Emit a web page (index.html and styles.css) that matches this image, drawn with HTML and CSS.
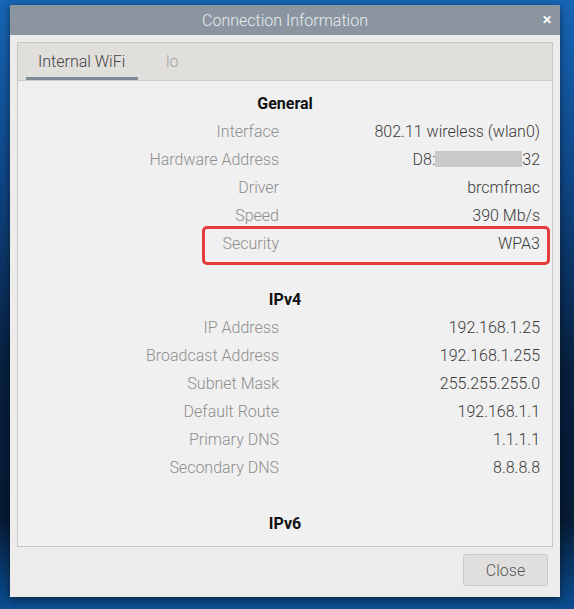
FILE: index.html
```html
<!DOCTYPE html>
<html lang="en">
<head>
    <meta charset="UTF-8">
    <meta name="viewport" content="width=device-width, initial-scale=1.0">
    <title>Connection Information</title>
    <link rel="stylesheet" href="styles.css">
</head>
<body>

<div class="window">
    <div class="titlebar">
        <span></span>
        <span class="title">Connection Information</span>
        <span class="close-x">&#x2715;</span>
    </div>

    <div class="notebook">
        <div class="tabs">
            <div class="tab active">Internal WiFi</div>
            <div class="tab">lo</div>
        </div>

        <div class="page">
            <h3 class="section">General</h3>
            <div class="row"><span class="label">Interface</span><span class="value">802.11 wireless (wlan0)</span></div>
            <div class="row"><span class="label">Hardware Address</span><span class="value">D8:<span class="redact"></span>32</span></div>
            <div class="row"><span class="label">Driver</span><span class="value">brcmfmac</span></div>
            <div class="row"><span class="label">Speed</span><span class="value">390 Mb/s</span></div>
            <div class="row marked"><span class="label">Security</span><span class="value">WPA3</span></div>

            <h3 class="section spaced">IPv4</h3>
            <div class="row"><span class="label">IP Address</span><span class="value">192.168.1.25</span></div>
            <div class="row"><span class="label">Broadcast Address</span><span class="value">192.168.1.255</span></div>
            <div class="row"><span class="label">Subnet Mask</span><span class="value">255.255.255.0</span></div>
            <div class="row"><span class="label">Default Route</span><span class="value">192.168.1.1</span></div>
            <div class="row"><span class="label">Primary DNS</span><span class="value">1.1.1.1</span></div>
            <div class="row"><span class="label">Secondary DNS</span><span class="value">8.8.8.8</span></div>

            <h3 class="section spaced">IPv6</h3>
        </div>
    </div>

    <div class="buttons">
        <button class="btn">Close</button>
    </div>
</div>

</body>
</html>
```

FILE: styles.css
```css
body {
    margin: 0;
    height: 609px;
    overflow: hidden;
    font-family: Roboto, "Liberation Sans", sans-serif;
    background: linear-gradient(to bottom, #1766b6 0%, #0f4584 30%, #07203f 60%, #061a33 85%, #0b4e92 100%);
}
.window {
    margin: 5px 0 0 10px;
    width: 550px;
    height: 592px;
    background-color: #edecea;
    display: flex;
    flex-direction: column;
    box-shadow: 0 2px 8px rgba(0, 0, 0, 0.5);
}
.titlebar {
    height: 30px;
    background-color: #8a959f;
    display: grid;
    grid-template-columns: 30px 1fr 30px;
    align-items: center;
}
.title {
    text-align: center;
    color: #e9ecef;
    font-size: 16px;
    font-weight: 300;
}
.close-x {
    color: white;
    font-size: 12px;
    font-weight: bold;
    text-align: center;
    padding-left: 4px;
}
.notebook {
    margin: 7px 7px 0 7px;
    height: 503px;
    border: 1px solid #c7c5c2;
    background-color: #f0f0f0;
    display: flex;
    flex-direction: column;
    overflow: hidden;
}
.tabs {
    height: 37px;
    background-color: #e1dfdc;
    border-bottom: 1px solid #cfcdca;
    display: flex;
    padding-left: 8px;
}
.tab {
    padding: 0 12px;
    line-height: 37px;
    font-size: 16px;
    font-weight: 300;
    color: #a3a3a3;
    box-sizing: border-box;
}
.tab.active {
    width: 112px;
    color: #444;
    border-bottom: 3px solid #7e8a95;
    margin-right: 16px;
}
.page {
    padding-top: 9px;
}
.section {
    margin: 0;
    height: 28px;
    line-height: 28px;
    text-align: center;
    font-size: 16px;
    font-weight: bold;
    color: #111;
}
.section.spaced { margin-top: 28px; }
.row {
    display: flex;
    height: 28px;
    line-height: 28px;
    font-size: 16px;
    padding-right: 12px;
    position: relative;
}
.label {
    width: 261px;
    text-align: right;
    color: #8e8e8e;
    font-weight: 300;
}
.value {
    flex: 1;
    text-align: right;
    color: #3a3a3a;
    font-weight: 300;
}
.redact {
    display: inline-block;
    width: 87px;
    height: 16px;
    background-color: #c9c9c9;
    vertical-align: -2px;
}
/* annotation box round the Security row */
.marked::after {
    content: "";
    position: absolute;
    left: 184px;
    right: 2px;
    top: -4px;
    bottom: -7px;
    border: 3px solid #e63b3b;
    border-radius: 5px;
}
.buttons {
    display: flex;
    justify-content: flex-end;
    padding: 7px 12px 0 0;
}
.btn {
    width: 85px;
    height: 32px;
    font-family: Roboto, "Liberation Sans", sans-serif;
    font-size: 16px;
    font-weight: 300;
    color: #555;
    background-color: #e0dfdd;
    border: 1px solid #cbcac8;
    border-radius: 3px;
}
```
